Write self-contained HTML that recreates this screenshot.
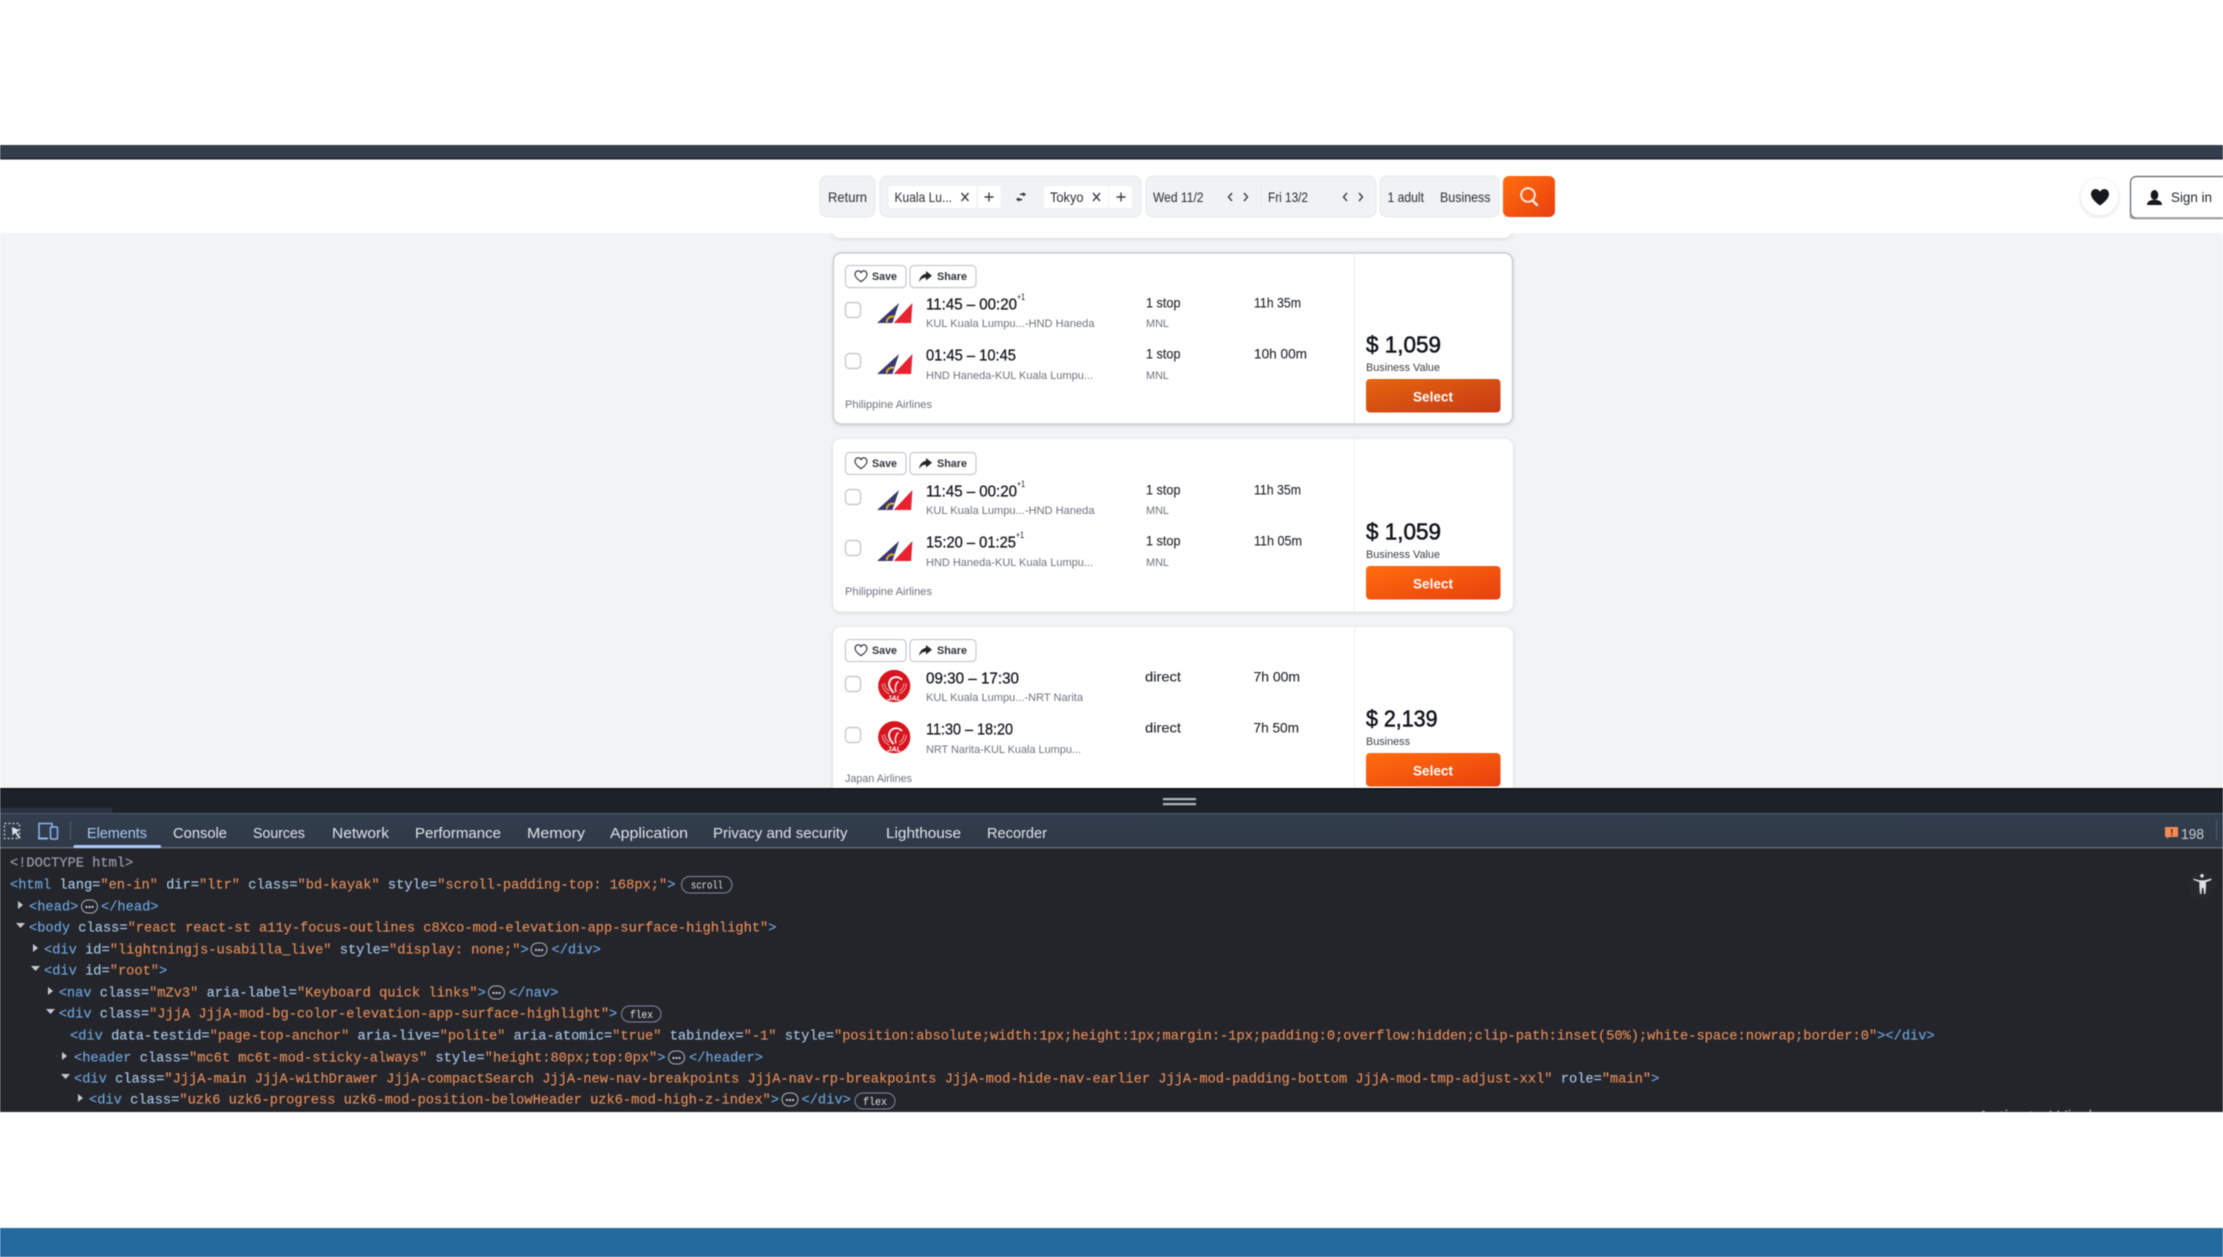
<!DOCTYPE html>
<html lang="en">
<head>
<meta charset="utf-8">
<title>Flight results with DevTools</title>
<style>
html,body{margin:0;padding:0;background:#fff;width:2223px;height:1257px;overflow:hidden}
svg{display:block;position:absolute;left:0;top:0;filter:blur(.4px)}
text{font-family:"Liberation Sans",sans-serif;white-space:pre}
.n{font-size:14px;fill:#2b2f36}
.time{font-size:16px;fill:#15181d;stroke:#15181d;stroke-width:.3px;transform:translateY(-.6px)}
.sup{font-size:9px;fill:#15181d}
.sub{font-size:11px;fill:#6d737b}
.stop{font-size:14px;fill:#22262c;stroke:#22262c;stroke-width:.12px;transform:translateY(-.4px)}
.air{font-size:11px;fill:#6d737b}
.price{font-size:23px;fill:#11141a;stroke:#11141a;stroke-width:.55px;transform:translateY(-.5px)}
.lab{font-size:11px;fill:#3b4047}
.sel{font-size:13.5px;font-weight:bold;fill:#fff;transform:translateY(-.5px)}
.btn{font-size:11px;font-weight:bold;fill:#31353b}
.btnr{fill:#fff;stroke:#c6c9cd;stroke-width:1.2}
.cb{fill:#fff;stroke:#c6c9cd;stroke-width:1.4}
.tab{font-size:14.5px;fill:#dfe3e8}
.m{font-family:"Liberation Mono",monospace;font-size:13.7px;fill:#6ea4dc;stroke:#6ea4dc;stroke-width:.15px;transform:translateY(-.5px)}
.a{fill:#a6c4e4;stroke:#a6c4e4}
.v{fill:#e58b58;stroke:#e58b58}
.g{fill:#9aa0a6;stroke:#9aa0a6}
.b{font-family:"Liberation Mono",monospace;font-size:11px;fill:#dfe3e8}
.pill{fill:none;stroke:#7f8b99;stroke-width:1}
.dot{fill:#c5cad0}
</style>
</head>
<body>
<svg xmlns="http://www.w3.org/2000/svg" width="2223" height="1257" viewBox="0 0 2223 1257">
<defs>
<linearGradient id="g1" x1="0" y1="0" x2="1" y2="1"><stop offset="0" stop-color="#e4650f"/><stop offset="1" stop-color="#c83a16"/></linearGradient>
<linearGradient id="g2" x1="0" y1="0" x2="1" y2="1"><stop offset="0" stop-color="#ff6d0e"/><stop offset="1" stop-color="#e8400f"/></linearGradient>
<linearGradient id="tabbg" x1="0" y1="0" x2="0" y2="1"><stop offset="0" stop-color="#333e4e"/><stop offset="1" stop-color="#2f3947"/></linearGradient>
<filter id="sh" x="-5%" y="-5%" width="110%" height="115%"><feDropShadow dx="0" dy="1" stdDeviation="2" flood-color="#000" flood-opacity=".13"/></filter>
<filter id="sh2" x="-30%" y="-30%" width="160%" height="170%"><feDropShadow dx="0" dy="1" stdDeviation="2" flood-color="#000" flood-opacity=".16"/></filter>
<symbol id="pal" viewBox="0 0 106 60">
<polygon points="0,60 66,0 46,60" fill="#37386f"/>
<path d="M29 58A17 17 0 0 1 53 42" fill="none" stroke="#e2a92e" stroke-width="6"/>
<polygon points="106,0 102,60 50,60" fill="#ea2130"/>
</symbol>
<symbol id="jal" viewBox="0 0 97 98">
<circle cx="48.500" cy="49" r="48" fill="#d8141e"/>
<path d="M70 29C60 18 35 20 33 42c-1 11 7 19 12 26" fill="none" stroke="#fff" stroke-width="5.500" stroke-linecap="round"/>
<path d="M60 36C52 43 50 56 53 66" fill="none" stroke="#fff" stroke-width="4" stroke-linecap="round"/>
<path d="M12 42C13 57 22 68 34 72M19 40C20 52 26 60 34 64M85 42C84 57 75 68 63 72M78 40C77 52 71 60 63 64" fill="none" stroke="#fff" stroke-width="1.800"/>
<text x="48" y="92" text-anchor="middle" style="font-size:22px;font-weight:bold;font-style:italic;fill:#fff">JAL</text>
</symbol>
<symbol id="heartO" viewBox="0 0 24 22">
<path d="M12 20.500S3.500 15 1.800 9.700C.6 5.600 3.200 1.500 7 1.500c2.200 0 4 1.200 5 3 1-1.800 2.800-3 5-3 3.800 0 6.400 4.100 5.200 8.200C20.500 15 12 20.500 12 20.500z" fill="none" stroke="#2b2f36" stroke-width="2"/>
</symbol>
<symbol id="arrow" viewBox="0 0 26 22">
<path d="M14 0L26 9.500 14 19V13.500C8 13.500 3.500 16 0 22 1 13 6 7 14 5.500z" fill="#22262c"/>
</symbol>
<clipPath id="dt"><rect x="0" y="788" width="2223" height="324"/></clipPath>
</defs>

<!-- page -->
<rect x="0" y="0" width="2223" height="1257" fill="#fff"/>
<rect x="0" y="233" width="2223" height="555" fill="#f1f3f5"/>

<!-- partial card -->
<rect x="832" y="200" width="680" height="38" rx="8" fill="#fff" filter="url(#sh)"/>

<!-- header -->
<rect x="0" y="159" width="2223" height="74" fill="#fff"/>
<rect x="0" y="145" width="2223" height="14" fill="#333d4b"/>
<rect x="0" y="158" width="2223" height="1.500" fill="#20262e"/>

<!-- search form -->
<g fill="#f0f2f4" stroke="#e6e8eb">
<rect x="820" y="176" width="55" height="41" rx="7"/>
<rect x="880" y="176" width="261" height="41" rx="7"/>
<rect x="1146" y="176" width="230" height="41" rx="7"/>
<rect x="1380" y="176" width="119" height="41" rx="7"/>
</g>
<g fill="#fff">
<rect x="888.500" y="186" width="88" height="22" rx="2"/>
<rect x="978" y="186" width="22.500" height="22" rx="2"/>
<rect x="1044" y="186" width="64" height="22" rx="2"/>
<rect x="1109" y="186" width="23" height="22" rx="2"/>
</g>
<rect x="1260.500" y="186" width="1" height="22" fill="#e6e8eb"/>
<text class="n" x="828" y="202" textLength="39" lengthAdjust="spacingAndGlyphs">Return</text>
<text class="n" x="894.500" y="202" textLength="57.500" lengthAdjust="spacingAndGlyphs">Kuala Lu...</text>
<text class="n" x="1050" y="202" textLength="33.500" lengthAdjust="spacingAndGlyphs">Tokyo</text>
<text class="n" x="1153" y="202" textLength="50.500" lengthAdjust="spacingAndGlyphs">Wed 11/2</text>
<text class="n" x="1268" y="202" textLength="40" lengthAdjust="spacingAndGlyphs">Fri 13/2</text>
<text class="n" x="1387.500" y="202" textLength="36.500" lengthAdjust="spacingAndGlyphs">1 adult</text>
<text class="n" x="1440" y="202" textLength="50.500" lengthAdjust="spacingAndGlyphs">Business</text>
<g stroke="#3a3f46" stroke-width="1.400" fill="none">
<path d="M961.500 193l7 8M968.500 193l-7 8"/>
<path d="M1093 193l7 8M1100 193l-7 8"/>
<path d="M989 192.500v9M984.500 197h9"/>
<path d="M1121 192.500v9M1116.500 197h9"/>
<path d="M1232 193l-3.500 4 3.500 4M1244 193l3.500 4-3.500 4"/>
<path d="M1347 193l-3.500 4 3.500 4M1359 193l3.500 4-3.500 4"/>
</g>
<g fill="#2b2f36"><path d="M1020 193.500h3v-1.500l3 2.500-3 2v-1.500h-3zM1022 200.500h-3v1.200l-3-2.500 3-2v1.500h3z"/></g>

<!-- search button -->
<rect x="1503" y="176" width="52" height="41" rx="6" fill="url(#g2)"/>
<circle cx="1528" cy="195" r="6.800" fill="none" stroke="#ffe9dc" stroke-width="2"/>
<path d="M1532.500 200.500l4.500 4.500" stroke="#ffe9dc" stroke-width="2.400" stroke-linecap="round"/>

<!-- right actions -->
<circle cx="2099.500" cy="197" r="18.500" fill="#fff" filter="url(#sh2)"/>
<path d="M2100 205.500s-9-5.800-9-11.500c0-3 2.300-5 4.600-5 2 0 3.500 1.200 4.400 2.800.9-1.600 2.400-2.800 4.400-2.800 2.300 0 4.600 2 4.600 5 0 5.700-9 11.500-9 11.500z" fill="#15181d"/>
<rect x="2130.500" y="176.500" width="110" height="41.500" rx="6" fill="#fff" stroke="#5b6066" stroke-width="1.200"/>
<path d="M2130.500 214v2c0 2 1.500 2.500 4 2.500H2224" stroke="#9a9da1" stroke-width="1.500" fill="none"/>
<ellipse cx="2154.500" cy="195" rx="3.800" ry="5" fill="#15181d"/>
<path d="M2147 205c0-3.500 3-4.500 5-5h5c2 .5 5 1.500 5 5z" fill="#15181d"/>
<text x="2171" y="202" style="font-size:14px;fill:#22262c" textLength="41" lengthAdjust="spacingAndGlyphs">Sign in</text>

<!-- card 1 -->
<g>
<rect x="833.500" y="253" width="679" height="171" rx="8" fill="#fff" stroke="#c3c7cb" stroke-width="1.200" filter="url(#sh)"/>
<rect x="1354" y="254" width="1" height="169" fill="#e8eaec"/>
<rect class="btnr" x="845.500" y="265.500" width="60.500" height="22" rx="4"/>
<rect class="btnr" x="910" y="265.500" width="66" height="22" rx="4"/>
<use href="#heartO" x="854" y="270" width="14" height="12.500"/>
<text class="btn" x="872" y="280" textLength="25" lengthAdjust="spacingAndGlyphs">Save</text>
<use href="#arrow" x="919" y="271" width="13" height="11"/>
<text class="btn" x="937" y="280" textLength="30" lengthAdjust="spacingAndGlyphs">Share</text>
<rect class="cb" x="845.500" y="302.500" width="15" height="15" rx="4"/>
<rect class="cb" x="845.500" y="353.500" width="15" height="15" rx="4"/>
<use href="#pal" x="877" y="303" width="35.500" height="20"/>
<use href="#pal" x="877" y="354" width="35.500" height="20"/>
<text class="time" x="926" y="310" textLength="91" lengthAdjust="spacingAndGlyphs">11:45 – 00:20</text>
<text class="sup" x="1017" y="300" textLength="8" lengthAdjust="spacingAndGlyphs">+1</text>
<text class="sub" x="926" y="327" textLength="168.500" lengthAdjust="spacingAndGlyphs">KUL Kuala Lumpu...-HND Haneda</text>
<text class="stop" x="1146" y="308" textLength="34.500" lengthAdjust="spacingAndGlyphs">1 stop</text>
<text class="sub" x="1146" y="327" textLength="23" lengthAdjust="spacingAndGlyphs">MNL</text>
<text class="stop" x="1254" y="308" textLength="47" lengthAdjust="spacingAndGlyphs">11h 35m</text>
<text class="time" x="926" y="361" textLength="90" lengthAdjust="spacingAndGlyphs">01:45 – 10:45</text>
<text class="sub" x="926" y="379" textLength="167" lengthAdjust="spacingAndGlyphs">HND Haneda-KUL Kuala Lumpu...</text>
<text class="stop" x="1146" y="359" textLength="34.500" lengthAdjust="spacingAndGlyphs">1 stop</text>
<text class="sub" x="1146" y="379" textLength="23" lengthAdjust="spacingAndGlyphs">MNL</text>
<text class="stop" x="1254" y="359" textLength="53" lengthAdjust="spacingAndGlyphs">10h 00m</text>
<text class="air" x="845" y="408" textLength="87" lengthAdjust="spacingAndGlyphs">Philippine Airlines</text>
<text class="price" x="1366" y="353" textLength="75" lengthAdjust="spacingAndGlyphs">$ 1,059</text>
<text class="lab" x="1366" y="371" textLength="74" lengthAdjust="spacingAndGlyphs">Business Value</text>
<rect x="1366" y="379" width="134.500" height="33.500" rx="4" fill="url(#g1)"/>
<text class="sel" x="1413" y="402" textLength="40" lengthAdjust="spacingAndGlyphs">Select</text>
</g>

<!-- card 2 -->
<g transform="translate(0,187)">
<rect x="833" y="252" width="680" height="172.500" rx="8" fill="#fff" filter="url(#sh)"/>
<rect x="1354" y="252" width="1" height="172" fill="#eceef0"/>
<rect class="btnr" x="845.500" y="265.500" width="60.500" height="22" rx="4"/>
<rect class="btnr" x="910" y="265.500" width="66" height="22" rx="4"/>
<use href="#heartO" x="854" y="270" width="14" height="12.500"/>
<text class="btn" x="872" y="280" textLength="25" lengthAdjust="spacingAndGlyphs">Save</text>
<use href="#arrow" x="919" y="271" width="13" height="11"/>
<text class="btn" x="937" y="280" textLength="30" lengthAdjust="spacingAndGlyphs">Share</text>
<rect class="cb" x="845.500" y="302.500" width="15" height="15" rx="4"/>
<rect class="cb" x="845.500" y="353.500" width="15" height="15" rx="4"/>
<use href="#pal" x="877" y="303" width="35.500" height="20"/>
<use href="#pal" x="877" y="354" width="35.500" height="20"/>
<text class="time" x="926" y="310" textLength="91" lengthAdjust="spacingAndGlyphs">11:45 – 00:20</text>
<text class="sup" x="1017" y="300" textLength="8" lengthAdjust="spacingAndGlyphs">+1</text>
<text class="sub" x="926" y="327" textLength="168.500" lengthAdjust="spacingAndGlyphs">KUL Kuala Lumpu...-HND Haneda</text>
<text class="stop" x="1146" y="308" textLength="34.500" lengthAdjust="spacingAndGlyphs">1 stop</text>
<text class="sub" x="1146" y="327" textLength="23" lengthAdjust="spacingAndGlyphs">MNL</text>
<text class="stop" x="1254" y="308" textLength="47" lengthAdjust="spacingAndGlyphs">11h 35m</text>
<text class="time" x="926" y="361" textLength="90" lengthAdjust="spacingAndGlyphs">15:20 – 01:25</text>
<text class="sup" x="1016" y="351" textLength="8" lengthAdjust="spacingAndGlyphs">+1</text>
<text class="sub" x="926" y="379" textLength="167" lengthAdjust="spacingAndGlyphs">HND Haneda-KUL Kuala Lumpu...</text>
<text class="stop" x="1146" y="359" textLength="34.500" lengthAdjust="spacingAndGlyphs">1 stop</text>
<text class="sub" x="1146" y="379" textLength="23" lengthAdjust="spacingAndGlyphs">MNL</text>
<text class="stop" x="1254" y="359" textLength="48" lengthAdjust="spacingAndGlyphs">11h 05m</text>
<text class="air" x="845" y="408" textLength="87" lengthAdjust="spacingAndGlyphs">Philippine Airlines</text>
<text class="price" x="1366" y="353" textLength="75" lengthAdjust="spacingAndGlyphs">$ 1,059</text>
<text class="lab" x="1366" y="371" textLength="74" lengthAdjust="spacingAndGlyphs">Business Value</text>
<rect x="1366" y="379" width="134.500" height="33.500" rx="4" fill="url(#g2)"/>
<text class="sel" x="1413" y="402" textLength="40" lengthAdjust="spacingAndGlyphs">Select</text>
</g>

<!-- card 3 -->
<g transform="translate(0,374)">
<rect x="833" y="253" width="680" height="172.500" rx="8" fill="#fff" filter="url(#sh)"/>
<rect x="1354" y="254" width="1" height="172" fill="#eceef0"/>
<rect class="btnr" x="845.500" y="265.500" width="60.500" height="22" rx="4"/>
<rect class="btnr" x="910" y="265.500" width="66" height="22" rx="4"/>
<use href="#heartO" x="854" y="270" width="14" height="12.500"/>
<text class="btn" x="872" y="280" textLength="25" lengthAdjust="spacingAndGlyphs">Save</text>
<use href="#arrow" x="919" y="271" width="13" height="11"/>
<text class="btn" x="937" y="280" textLength="30" lengthAdjust="spacingAndGlyphs">Share</text>
<rect class="cb" x="845.500" y="302.500" width="15" height="15" rx="4"/>
<rect class="cb" x="845.500" y="353.500" width="15" height="15" rx="4"/>
<use href="#jal" x="878" y="295.500" width="32.500" height="33"/>
<use href="#jal" x="878" y="346.700" width="32.500" height="33"/>
<text class="time" x="926" y="310" textLength="93" lengthAdjust="spacingAndGlyphs">09:30 – 17:30</text>
<text class="sub" x="926" y="327" textLength="157" lengthAdjust="spacingAndGlyphs">KUL Kuala Lumpu...-NRT Narita</text>
<text class="stop" x="1145" y="308" textLength="36" lengthAdjust="spacingAndGlyphs">direct</text>
<text class="stop" x="1253.500" y="308" textLength="46.500" lengthAdjust="spacingAndGlyphs">7h 00m</text>
<text class="time" x="926" y="361" textLength="87" lengthAdjust="spacingAndGlyphs">11:30 – 18:20</text>
<text class="sub" x="926" y="379" textLength="155" lengthAdjust="spacingAndGlyphs">NRT Narita-KUL Kuala Lumpu...</text>
<text class="stop" x="1145" y="359" textLength="36" lengthAdjust="spacingAndGlyphs">direct</text>
<text class="stop" x="1253.500" y="359" textLength="45.500" lengthAdjust="spacingAndGlyphs">7h 50m</text>
<text class="air" x="845" y="408" textLength="67" lengthAdjust="spacingAndGlyphs">Japan Airlines</text>
<text class="price" x="1366" y="353" textLength="71.500" lengthAdjust="spacingAndGlyphs">$ 2,139</text>
<text class="lab" x="1366" y="371" textLength="44" lengthAdjust="spacingAndGlyphs">Business</text>
<rect x="1366" y="379" width="134.500" height="33.500" rx="4" fill="url(#g2)"/>
<text class="sel" x="1413" y="402" textLength="40" lengthAdjust="spacingAndGlyphs">Select</text>
</g>

<!-- DevTools -->
<rect x="0" y="788" width="2223" height="324" fill="#23252b"/>
<rect x="0" y="788" width="2223" height="1.500" fill="#0a0c10"/>
<rect x="0" y="789.500" width="2223" height="23.500" fill="#1d2229"/>
<rect x="0" y="808" width="112" height="5" fill="#2b3340"/>
<rect x="1163" y="798" width="33" height="2.200" fill="#b4b8bd"/>
<rect x="1163" y="803" width="33" height="2.200" fill="#b4b8bd"/>
<rect x="0" y="813" width="2223" height="35" fill="url(#tabbg)"/>
<rect x="0" y="813" width="2223" height="1" fill="#4b5868"/>
<rect x="0" y="847" width="2223" height="1.500" fill="#5d6876"/>

<!-- toolbar icons -->
<rect x="4.500" y="823.500" width="15" height="15" fill="none" stroke="#c7ccd2" stroke-width="1.200" stroke-dasharray="2 2"/>
<path d="M12 827l8 3.500-3.500 1.200 4 6-1.500 1-4-6-2.500 3z" fill="#dfe3e8"/>
<path d="M39 838v-14.500h13v3" fill="none" stroke="#8ab4f8" stroke-width="1.500"/>
<rect x="38" y="837.500" width="10" height="2" fill="#8ab4f8"/>
<rect x="50.500" y="827" width="7" height="12" rx="1" fill="none" stroke="#8ab4f8" stroke-width="1.500"/>
<rect x="70" y="821" width="1" height="19" fill="#515c69"/>

<!-- tabs -->
<text class="tab" x="87" y="838" textLength="60" lengthAdjust="spacingAndGlyphs" style="fill:#a8c9f5">Elements</text>
<rect x="73.500" y="845" width="87.500" height="3" rx="1" fill="#a8c7fa"/>
<text class="tab" x="173" y="838" textLength="54" lengthAdjust="spacingAndGlyphs">Console</text>
<text class="tab" x="253" y="838" textLength="52" lengthAdjust="spacingAndGlyphs">Sources</text>
<text class="tab" x="332" y="838" textLength="57" lengthAdjust="spacingAndGlyphs">Network</text>
<text class="tab" x="415" y="838" textLength="86" lengthAdjust="spacingAndGlyphs">Performance</text>
<text class="tab" x="527" y="838" textLength="58" lengthAdjust="spacingAndGlyphs">Memory</text>
<text class="tab" x="610" y="838" textLength="78" lengthAdjust="spacingAndGlyphs">Application</text>
<text class="tab" x="713" y="838" textLength="134.500" lengthAdjust="spacingAndGlyphs">Privacy and security</text>
<text class="tab" x="886" y="838" textLength="75" lengthAdjust="spacingAndGlyphs">Lighthouse</text>
<text class="tab" x="987" y="838" textLength="60" lengthAdjust="spacingAndGlyphs">Recorder</text>

<!-- issues -->
<path d="M2165 827h13v10h-9l-2 2v-2h-2z" fill="#f28b54"/>
<rect x="2171" y="829" width="1.500" height="4" fill="#5a2a10"/><rect x="2171" y="834" width="1.500" height="1.500" fill="#5a2a10"/>
<text class="tab" x="2181" y="839" textLength="23" lengthAdjust="spacingAndGlyphs" style="fill:#c6cbd1">198</text>
<rect x="2216" y="820" width="1" height="20" fill="#4f5a67"/>

<!-- accessibility -->
<circle cx="2202" cy="885" r="14" fill="#26282e"/>
<circle cx="2202" cy="875.800" r="1.800" fill="#dde0e4"/>
<path d="M2193 878.500l6 1.800h6l6-1.800.4 1.600-5.400 2v5.400l-.6 6.500h-1.400l-.6-6h-1.400l-.6 6h-1.400l-.6-6.500v-5.400l-5.400-2z" fill="#dde0e4"/>

<!-- code -->
<text class="m" x="10" y="867"><tspan class="g">&lt;!DOCTYPE html&gt;</tspan></text>
<text class="m" x="10" y="889">&lt;html <tspan class="a">lang=</tspan><tspan class="v">"en-in"</tspan> <tspan class="a">dir=</tspan><tspan class="v">"ltr"</tspan> <tspan class="a">class=</tspan><tspan class="v">"bd-kayak"</tspan> <tspan class="a">style=</tspan><tspan class="v">"scroll-padding-top: 168px;"</tspan>&gt;</text>
<rect class="pill" x="681.500" y="876.500" width="50.500" height="16.500" rx="8.200"/>
<text class="b" x="691" y="888.500" textLength="32" lengthAdjust="spacingAndGlyphs">scroll</text>

<text class="m" x="29" y="911">&lt;head&gt;</text>
<text class="m" x="101" y="911">&lt;/head&gt;</text>
<text class="m" x="29" y="932">&lt;body <tspan class="a">class=</tspan><tspan class="v">"react react-st a11y-focus-outlines c8Xco-mod-elevation-app-surface-highlight"</tspan>&gt;</text>
<text class="m" x="44" y="954">&lt;div <tspan class="a">id=</tspan><tspan class="v">"lightningjs-usabilla_live"</tspan> <tspan class="a">style=</tspan><tspan class="v">"display: none;"</tspan>&gt;</text>
<text class="m" x="551.500" y="954">&lt;/div&gt;</text>
<text class="m" x="44" y="975">&lt;div <tspan class="a">id=</tspan><tspan class="v">"root"</tspan>&gt;</text>
<text class="m" x="58.700" y="997">&lt;nav <tspan class="a">class=</tspan><tspan class="v">"mZv3"</tspan> <tspan class="a">aria-label=</tspan><tspan class="v">"Keyboard quick links"</tspan>&gt;</text>
<text class="m" x="509" y="997">&lt;/nav&gt;</text>
<text class="m" x="58.700" y="1018">&lt;div <tspan class="a">class=</tspan><tspan class="v">"JjjA JjjA-mod-bg-color-elevation-app-surface-highlight"</tspan>&gt;</text>
<rect class="pill" x="621.500" y="1006" width="39.500" height="16" rx="8"/>
<text class="b" x="630" y="1018" textLength="23" lengthAdjust="spacingAndGlyphs">flex</text>
<text class="m" x="70" y="1040">&lt;div <tspan class="a">data-testid=</tspan><tspan class="v">"page-top-anchor"</tspan> <tspan class="a">aria-live=</tspan><tspan class="v">"polite"</tspan> <tspan class="a">aria-atomic=</tspan><tspan class="v">"true"</tspan> <tspan class="a">tabindex=</tspan><tspan class="v">"-1"</tspan> <tspan class="a">style=</tspan><tspan class="v">"position:absolute;width:1px;height:1px;margin:-1px;padding:0;overflow:hidden;clip-path:inset(50%);white-space:nowrap;border:0"</tspan>&gt;&lt;/div&gt;</text>
<text class="m" x="74" y="1062">&lt;header <tspan class="a">class=</tspan><tspan class="v">"mc6t mc6t-mod-sticky-always"</tspan> <tspan class="a">style=</tspan><tspan class="v">"height:80px;top:0px"</tspan>&gt;</text>
<text class="m" x="689" y="1062">&lt;/header&gt;</text>
<text class="m" x="74" y="1083">&lt;div <tspan class="a">class=</tspan><tspan class="v">"JjjA-main JjjA-withDrawer JjjA-compactSearch JjjA-new-nav-breakpoints JjjA-nav-rp-breakpoints JjjA-mod-hide-nav-earlier JjjA-mod-padding-bottom JjjA-mod-tmp-adjust-xxl"</tspan> <tspan class="a">role=</tspan><tspan class="v">"main"</tspan>&gt;</text>
<text class="m" x="89" y="1104">&lt;div <tspan class="a">class=</tspan><tspan class="v">"uzk6 uzk6-progress uzk6-mod-position-belowHeader uzk6-mod-high-z-index"</tspan>&gt;</text>
<text class="m" x="801.500" y="1104">&lt;/div&gt;</text>
<rect class="pill" x="855" y="1093" width="40" height="16" rx="8"/>
<text class="b" x="863" y="1105" textLength="24" lengthAdjust="spacingAndGlyphs">flex</text>

<!-- triangles -->
<g fill="#c5cad0">
<path d="M18 901v8l5-4z"/>
<path d="M16 923h9l-4.500 5z"/>
<path d="M33 944v8l5-4z"/>
<path d="M31 966h9l-4.500 5z"/>
<path d="M48 987v8l5-4z"/>
<path d="M46 1009h9l-4.500 5z"/>
<path d="M62 1052v8l5-4z"/>
<path d="M61 1074h9l-4.500 5z"/>
<path d="M78 1094v8l5-4z"/>
</g>

<!-- ellipsis pills -->
<g>
<rect class="pill" x="81.500" y="900" width="16" height="13" rx="6.500" style="stroke:#aab2bc"/>
<rect class="pill" x="531" y="943" width="16" height="13" rx="6.500" style="stroke:#aab2bc"/>
<rect class="pill" x="488.500" y="986" width="16" height="13" rx="6.500" style="stroke:#aab2bc"/>
<rect class="pill" x="668.500" y="1051" width="16" height="13" rx="6.500" style="stroke:#aab2bc"/>
<rect class="pill" x="782" y="1093" width="16" height="13" rx="6.500" style="stroke:#aab2bc"/>
<g class="dot">
<rect x="85.500" y="906" width="2" height="2"/><rect x="88.500" y="906" width="2" height="2"/><rect x="91.500" y="906" width="2" height="2"/>
<rect x="535" y="949" width="2" height="2"/><rect x="538" y="949" width="2" height="2"/><rect x="541" y="949" width="2" height="2"/>
<rect x="492.500" y="992" width="2" height="2"/><rect x="495.500" y="992" width="2" height="2"/><rect x="498.500" y="992" width="2" height="2"/>
<rect x="672.500" y="1057" width="2" height="2"/><rect x="675.500" y="1057" width="2" height="2"/><rect x="678.500" y="1057" width="2" height="2"/>
<rect x="786" y="1099" width="2" height="2"/><rect x="789" y="1099" width="2" height="2"/><rect x="792" y="1099" width="2" height="2"/>
</g>
</g>

<!-- clipped watermark -->
<g clip-path="url(#dt)">
<text x="1977" y="1124.500" style="font-size:20px;fill:#8b8e93" textLength="149" lengthAdjust="spacingAndGlyphs">Activate Windows</text>
</g>

<!-- bottom band -->
<rect x="0" y="1228" width="2223" height="29" fill="#256a9e"/>
</svg>
</body>
</html>
